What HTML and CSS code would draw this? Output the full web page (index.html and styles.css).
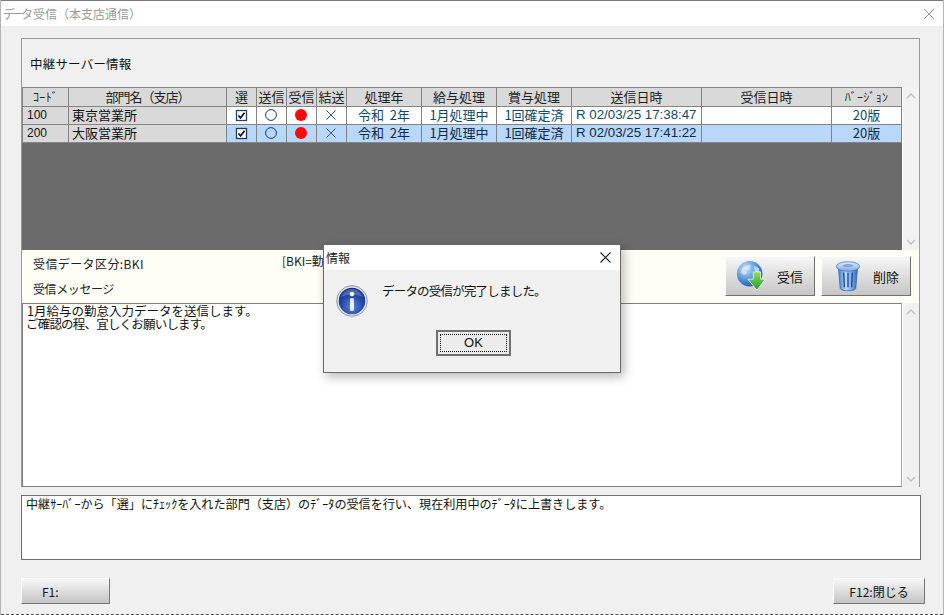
FILE: index.html
```html
<!DOCTYPE html>
<html lang="ja">
<head>
<meta charset="utf-8">
<title>データ受信（本支店通信）</title>
<link rel="stylesheet" href="styles.css">
</head>
<body>
<div class="window">
  <div class="titlebar">
    <span class="title"><span class="kana">データ</span>受信（本支店通信）</span>
    <svg class="win-close" width="12" height="12" viewBox="0 0 12 12"><path d="M1 1 11 11M11 1 1 11" stroke="#9a9a9a" stroke-width="1" fill="none"/></svg>
  </div>
  <div class="content">
    <div class="panel">
      <div class="panel-head">中継サーバー情報</div>
      <div class="grid-row">
        <div class="grid-area">
          <table class="grid">
            <colgroup>
              <col class="c46"><col class="c158"><col class="c30"><col class="c30"><col class="c30"><col class="c30"><col class="c75"><col class="c75"><col class="c75"><col class="c130"><col class="c130"><col class="c70">
            </colgroup>
            <thead>
              <tr><th class="narrow">ｺｰﾄﾞ</th><th class="dept">部門名（支店）</th><th>選</th><th>送信</th><th>受信</th><th>結送</th><th>処理年</th><th>給与処理</th><th>賞与処理</th><th>送信日時</th><th>受信日時</th><th class="narrow">ﾊﾞｰｼﾞｮﾝ</th></tr>
            </thead>
            <tbody>
              <tr>
                <td class="fixed code">100</td><td class="fixed name">東京営業所</td>
                <td class="mark"><svg class="ico" width="13" height="13" viewBox="0 0 13 13"><rect x="1.500" y="1.500" width="10" height="10" fill="#fff" stroke="#1c4a6e" stroke-width="1.300"/><path d="M3.500 6.500 5.600 9 9.500 3.800" stroke="#111" stroke-width="1.700" fill="none"/></svg></td>
                <td class="mark"><svg class="ico" width="14" height="14" viewBox="0 0 14 14"><circle cx="7" cy="7" r="5.400" fill="none" stroke="#123f6b" stroke-width="1"/></svg></td>
                <td class="mark"><svg class="ico" width="14" height="14" viewBox="0 0 14 14"><circle cx="7" cy="7" r="6" fill="#fa0a0a"/></svg></td>
                <td class="mark"><svg class="ico" width="14" height="14" viewBox="0 0 14 14"><path d="M2.500 2.500 11.500 11.500M11.500 2.500 2.500 11.500" stroke="#345f85" stroke-width="1" fill="none"/></svg></td>
                <td>令和&nbsp;&nbsp;2年</td><td>1月処理中</td><td>1回確定済</td><td class="date">R 02/03/25 17:38:47</td><td></td><td>20版</td>
              </tr>
              <tr class="selected">
                <td class="fixed code">200</td><td class="fixed name">大阪営業所</td>
                <td class="mark"><svg class="ico" width="13" height="13" viewBox="0 0 13 13"><rect x="1.500" y="1.500" width="10" height="10" fill="#fff" stroke="#1c3a55" stroke-width="1.300"/><path d="M3.500 6.500 5.600 9 9.500 3.800" stroke="#111" stroke-width="1.700" fill="none"/></svg></td>
                <td class="mark"><svg class="ico" width="14" height="14" viewBox="0 0 14 14"><circle cx="7" cy="7" r="5.400" fill="none" stroke="#123f6b" stroke-width="1"/></svg></td>
                <td class="mark"><svg class="ico" width="14" height="14" viewBox="0 0 14 14"><circle cx="7" cy="7" r="6" fill="#fa0a0a"/></svg></td>
                <td class="mark"><svg class="ico" width="14" height="14" viewBox="0 0 14 14"><path d="M2.500 2.500 11.500 11.500M11.500 2.500 2.500 11.500" stroke="#345f85" stroke-width="1" fill="none"/></svg></td>
                <td>令和&nbsp;&nbsp;2年</td><td>1月処理中</td><td>1回確定済</td><td class="date">R 02/03/25 17:41:22</td><td></td><td>20版</td>
              </tr>
            </tbody>
          </table>
        </div>
        <div class="scrollbar">
          <svg width="10" height="6" viewBox="0 0 10 6"><path d="M1 5 5 1 9 5" stroke="#c4c4c4" stroke-width="1.600" fill="none"/></svg>
          <svg width="10" height="6" viewBox="0 0 10 6"><path d="M1 1 5 5 9 1" stroke="#c4c4c4" stroke-width="1.600" fill="none"/></svg>
        </div>
      </div>
      <div class="info">
        <div class="info-left">
          <div class="wide">受信データ区分:BKI</div>
          <div class="tight">受信メッセージ</div>
        </div>
        <div class="info-note">[BKI=勤</div>
        <div class="info-actions">
          <button class="tool-btn">
            <svg width="31" height="32" viewBox="0 0 34 35">
              <defs>
                <radialGradient id="globe" cx="35%" cy="30%" r="75%"><stop offset="0" stop-color="#cfe4fb"/><stop offset=".55" stop-color="#5b97e0"/><stop offset="1" stop-color="#1d56ad"/></radialGradient>
                <linearGradient id="arrow" x1="0" y1="0" x2="0" y2="1"><stop offset="0" stop-color="#8fe05a"/><stop offset="1" stop-color="#1f9a2a"/></linearGradient>
              </defs>
              <circle cx="15" cy="15" r="14" fill="url(#globe)"/>
              <path d="M7 9c3-3 7-4 9-3l-1 4-4 1 1 4-4 1-3-3zM20 6l5 3 1 5-4-1-2-3z" fill="#dcebfb" opacity=".75"/>
              <path d="M19 13h8v8h5L23 33 13 21h6z" fill="url(#arrow)" stroke="#fff" stroke-width=".8"/>
            </svg>
            <span>受信</span>
          </button>
          <button class="tool-btn trash">
            <svg width="26" height="32" viewBox="0 0 30 36">
              <defs>
                <linearGradient id="can" x1="0" y1="0" x2="1" y2="0"><stop offset="0" stop-color="#3f7fd6"/><stop offset=".4" stop-color="#bcd8f8"/><stop offset="1" stop-color="#2f6cc4"/></linearGradient>
                <linearGradient id="lid" x1="0" y1="0" x2="0" y2="1"><stop offset="0" stop-color="#dfeeff"/><stop offset="1" stop-color="#7fa9dc"/></linearGradient>
              </defs>
              <path d="M4 9h22l-2 23c-.2 2-4 3-9 3s-8.800-1-9-3z" fill="url(#can)" stroke="#2c5da8" stroke-width=".8"/>
              <path d="M10 14l.8 17M15 14v17M20 14l-.8 17" stroke="#1f4f9c" stroke-width="1.600" fill="none"/>
              <ellipse cx="15" cy="7" rx="13.500" ry="5.500" fill="url(#lid)" stroke="#3a6db5" stroke-width=".8"/>
              <ellipse cx="15" cy="6" rx="6" ry="1.800" fill="#7ea6d8"/>
            </svg>
            <span>削除</span>
          </button>
        </div>
      </div>
      <div class="msg-row">
        <div class="msg">
          <div>1月給与の勤怠入力データを送信します。</div>
          <div class="msg-second">ご確認の程、宜しくお願いします。</div>
        </div>
        <div class="scrollbar pale">
          <svg width="10" height="6" viewBox="0 0 10 6"><path d="M1 5 5 1 9 5" stroke="#c4c4c4" stroke-width="1.600" fill="none"/></svg>
          <svg width="10" height="6" viewBox="0 0 10 6"><path d="M1 1 5 5 9 1" stroke="#c4c4c4" stroke-width="1.600" fill="none"/></svg>
        </div>
      </div>
    </div>
    <div class="hint">中継ｻｰﾊﾞｰから「選」にﾁｪｯｸを入れた部門（支店）のﾃﾞｰﾀの受信を行い、現在利用中のﾃﾞｰﾀに上書きします。</div>
    <div class="footer">
      <button class="fn-btn fn-left">F1:</button>
      <button class="fn-btn fn-right">F12:閉じる</button>
    </div>
  </div>

  <div class="dialog">
    <div class="dialog-title">
      <span>情報</span>
      <svg width="11" height="11" viewBox="0 0 11 11"><path d="M.5 .5 10.500 10.500M10.500 .5 .5 10.500" stroke="#222" stroke-width="1.100" fill="none"/></svg>
    </div>
    <div class="dialog-body">
      <svg class="dialog-icon" width="32" height="32" viewBox="0 0 32 32">
        <defs>
          <radialGradient id="info" cx="50%" cy="70%" r="70%"><stop offset="0" stop-color="#5b84d8"/><stop offset=".6" stop-color="#2247a8"/><stop offset="1" stop-color="#142f86"/></radialGradient>
        </defs>
        <circle cx="16" cy="16" r="15.300" fill="#e4e8ef" stroke="#8c93a3" stroke-width="1"/>
        <circle cx="16" cy="16" r="13.300" fill="url(#info)"/>
        <path d="M5 12c3-6 7-8 11-8s8 2 11 8c-6-3-16-3-22 0z" fill="#fff" opacity=".22"/>
        <circle cx="16" cy="9" r="2.300" fill="#fff"/>
        <rect x="14" y="13" width="4" height="13" rx="1.600" fill="#e9edf5"/>
      </svg>
      <div class="dialog-text">データの受信が完了しました。</div>
    </div>
    <div class="dialog-foot">
      <button class="ok"><span class="ok-inner">OK</span></button>
    </div>
  </div>
</div>
</body>
</html>
```

FILE: styles.css
```css
* { box-sizing: border-box; }
html, body { margin: 0; padding: 0; }
body {
  width: 944px;
  height: 615px;
  overflow: hidden;
  background: #b5b5b5;
  font-family: "Noto Sans CJK JP", "Noto Sans", sans-serif;
  font-size: 12px;
  color: #111;
}
.window {
  position: relative;
  width: 942px;
  height: 615px;
  margin-left: 1px;
  background: #f0f0f0;
  border-top: 1px solid #7a7a7a;
  border-bottom: 1px dashed #555;
}
.titlebar {
  height: 25px;
  background: #fff;
  display: flex;
  align-items: center;
  justify-content: space-between;
  padding: 0 8px 0 2px;
}
.title { color: #9b9b9b; font-size: 12px; }
.kana { letter-spacing: -3px; margin-right: 3px; }
.content { padding: 12px 0 0 20px; }

.panel {
  width: 899px;
  border: 1px solid #9a9a9a;
  border-bottom: 0;
}
.panel-head {
  height: 48px;
  padding: 16px 0 0 8px;
  line-height: 18px;
  font-size: 12.500px;
  letter-spacing: .2px;
}
.grid-row { display: flex; height: 163px; }
.grid-area { width: 880px; background: #6b6b6b; }
.scrollbar {
  flex: 1;
  display: flex;
  flex-direction: column;
  align-items: center;
  justify-content: space-between;
  padding: 6px 0 5px;
  background: #f2f2f2;
  border-left: 1px solid #fff;
}
.scrollbar.pale { background: #f0f0f0; }

.grid {
  table-layout: fixed;
  width: 880px;
  border-collapse: collapse;
  background: #fff;
  font-size: 13px;
}
.c46 { width: 46px; } .c158 { width: 158px; } .c30 { width: 30px; }
.c75 { width: 75px; } .c130 { width: 130px; } .c70 { width: 70px; }
.grid th, .grid td {
  border: 1px solid #848484;
  padding: 0 0 2px;
  height: 18px;
  line-height: 15px;
  white-space: nowrap;
  overflow: hidden;
  text-align: center;
}
.grid th { background: #d9d9d9; height: 19px; font-weight: 400; color: #222; }
.grid th.narrow { font-size: 12px; letter-spacing: .3px; }
.grid th.dept { letter-spacing: -1px; }
.grid td { color: #0f4a6c; background: #fff; }
.grid td.fixed { background: #d9d9d9; color: #111; text-align: left; }
.grid td.code { padding: 0 0 1px 4px; font-family: "Liberation Sans", sans-serif; font-size: 12px; }
.grid td.name { padding-left: 3px; font-size: 13px; }
.grid td.date { font-family: "Liberation Sans", sans-serif; font-size: 13.300px; text-align: left; padding-left: 4px; }
.grid td.mark { line-height: 0; padding: 0 1px 1px 0; }
.ico { vertical-align: middle; }
.selected td { background: #b9d7fb; color: #0b2a45; }

.info {
  height: 53px;
  background: #fffef6;
  display: flex;
  color: #222;
}
.info-left {
  width: 260px;
  padding: 5px 0 0 11px;
  display: flex;
  flex-direction: column;
  gap: 7px;
  line-height: 18px;
}
.wide { letter-spacing: .4px; }
.tight { letter-spacing: -.4px; }
.info-note { width: 443px; padding-top: 2px; line-height: 18px; }
.info-actions { display: flex; gap: 6px; padding-top: 6px; }
.tool-btn {
  width: 90px;
  height: 40px;
  padding: 0 11px 0 10px;
  display: flex;
  align-items: center;
  justify-content: space-between;
  background: linear-gradient(#f6f6f6, #c6c6c6);
  border: 1px solid;
  border-color: #fff #6f6f6f #6f6f6f #fff;
  font: inherit;
  font-size: 13px;
  color: #111;
}
.tool-btn.trash { padding-left: 13px; }

.msg-row { display: flex; height: 184px; }
.msg {
  width: 880px;
  background: #fff;
  border: 1px solid #7f7f7f;
  border-right-color: #a8a8a8;
  padding: 0 4px;
  line-height: 13px;
  font-size: 12.500px;
}
.msg-second { letter-spacing: -.8px; margin-left: -1px; }

.hint {
  width: 900px;
  height: 65px;
  margin-top: 8px;
  background: #fff;
  border: 1px solid #6f6f6f;
  padding: 0 4px;
  line-height: 15px;
  font-size: 12.100px;
}
.footer {
  width: 904px;
  margin-top: 18px;
  display: flex;
  justify-content: space-between;
}
.fn-btn {
  height: 26px;
  background: linear-gradient(#f7f7f7, #c4c4c4);
  border: 1px solid;
  border-color: #fff #777 #777 #fff;
  font: inherit;
  color: #111;
}
.fn-left { width: 89px; text-align: left; padding-left: 20px; }
.fn-right { width: 92px; }

.dialog {
  position: absolute;
  left: 322px;
  top: 243px;
  width: 298px;
  height: 129px;
  background: #f0f0f0;
  border: 1px solid #6a6a6a;
  box-shadow: 3px 4px 10px rgba(0, 0, 0, .28);
}
.dialog-title {
  height: 25px;
  background: #fff;
  display: flex;
  align-items: center;
  justify-content: space-between;
  padding: 0 9px 1px 2px;
  color: #222;
}
.dialog-body { display: flex; padding: 15px 0 0 12px; height: 60px; }
.dialog-icon { flex: none; }
.dialog-text { margin: -3px 0 0 14px; line-height: 18px; font-size: 12.500px; letter-spacing: -.8px; }
.dialog-foot { display: flex; justify-content: center; padding-left: 3px; }
.ok {
  width: 75px;
  height: 26px;
  padding: 2px;
  background: #ececec;
  border: 2px solid #707070;
  font-family: "Liberation Sans", sans-serif;
  font-size: 13px;
  color: #111;
}
.ok-inner {
  display: block;
  height: 100%;
  line-height: 16px;
  border: 1px dotted #111;
}
```
